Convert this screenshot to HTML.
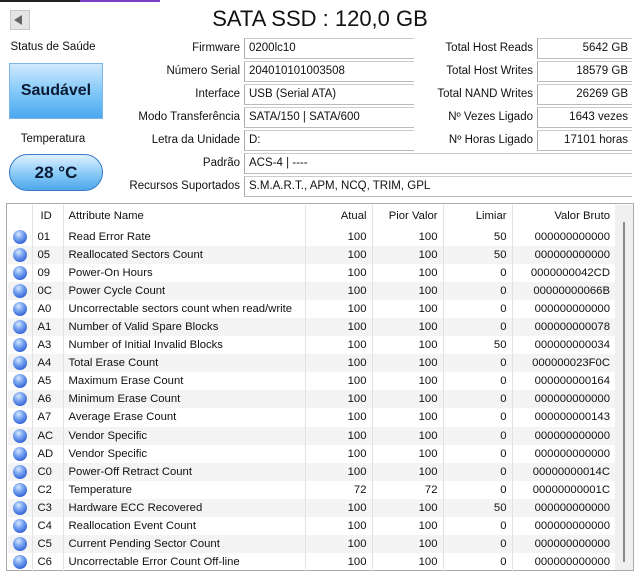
<!DOCTYPE html>
<html><head><meta charset="utf-8"><style>
*{margin:0;padding:0;box-sizing:border-box}
body{width:640px;height:576px;background:#fff;font-family:"Liberation Sans",sans-serif;font-size:11.5px;color:#111;position:relative;overflow:hidden}
.a{position:absolute;white-space:nowrap}
.lbl{position:absolute;text-align:right;white-space:nowrap}
.box{position:absolute;height:21px;border-left:1px solid #aaa;border-top:1px solid #ccc;border-bottom:1px solid #bbb;padding:3px 4px;white-space:nowrap}
.r{text-align:right}
table{border-collapse:collapse;position:absolute;left:8px;top:205px;width:607px;table-layout:fixed}
td,th{height:18.05px;line-height:18px;padding:0 5px;font-weight:normal;white-space:nowrap;overflow:hidden;font-size:11.3px}
th{height:23px;line-height:20px;vertical-align:top;padding-top:1px}
tr:nth-child(odd) td{background:#f4f4f4}
td.c,th.c{border-left:1px solid #e2e2e2}
td.d{padding:0 0 0 5px;line-height:0}
.dot{display:inline-block;margin-top:0;width:14px;height:14px;border-radius:50%;background:radial-gradient(circle at 40% 30%,#d8e8ff 0,#7aa6f0 35%,#2f5fd6 80%,#1c3fa8 100%)}
</style></head><body>
<div class="a" style="left:0;top:0;width:80px;height:2px;background:#222"></div>
<div class="a" style="left:80px;top:0;width:80px;height:2px;background:#7b3fc7"></div>
<div class="a" style="left:10px;top:10px;width:20px;height:20px;background:#e4e4e4;border:1px solid #c8c8c8"></div>
<div class="a" style="left:14px;top:15px;width:0;height:0;border-top:5px solid transparent;border-bottom:5px solid transparent;border-right:8px solid #666"></div>
<div class="a" style="left:0;width:640px;top:6px;text-align:center;font-size:22px;color:#111">SATA SSD : 120,0 GB</div>
<div class="a" style="left:0;width:106px;top:41px;text-align:center;font-size:11.5px">Status de Saúde</div>
<div class="a" style="left:9px;top:63px;width:94px;height:56px;border:1px solid #7bb7e8;background:linear-gradient(#cfeaff,#7ec6f7 55%,#4aa8ee);font-weight:bold;font-size:16px;text-align:center;line-height:54px;color:#0a1a33">Saudável</div>
<div class="a" style="left:0;width:106px;top:133px;text-align:center">Temperatura</div>
<div class="a" style="left:9px;top:154px;width:94px;height:37px;border-radius:19px;border:1px solid #3a7cc8;background:linear-gradient(#dff1ff,#86c9f6 55%,#4da6ea);font-weight:bold;font-size:17px;text-align:center;line-height:35px;color:#0a1a33">28 °C</div>

<div class="lbl" style="right:400px;top:42px">Firmware</div>
<div class="lbl" style="right:400px;top:65px">Número Serial</div>
<div class="lbl" style="right:400px;top:88px">Interface</div>
<div class="lbl" style="right:400px;top:111px">Modo Transferência</div>
<div class="lbl" style="right:400px;top:134px">Letra da Unidade</div>
<div class="lbl" style="right:400px;top:157px">Padrão</div>
<div class="lbl" style="right:400px;top:180px">Recursos Suportados</div>
<div class="box" style="left:244px;top:38px;width:170px">0200lc10</div>
<div class="box" style="left:244px;top:61px;width:170px">204010101003508</div>
<div class="box" style="left:244px;top:84px;width:170px">USB (Serial ATA)</div>
<div class="box" style="left:244px;top:107px;width:170px">SATA/150 | SATA/600</div>
<div class="box" style="left:244px;top:130px;width:170px">D:</div>
<div class="box" style="left:244px;top:153px;width:388px">ACS-4 | ----</div>
<div class="box" style="left:244px;top:176px;width:388px">S.M.A.R.T., APM, NCQ, TRIM, GPL</div>

<div class="lbl" style="right:107px;top:42px">Total Host Reads</div>
<div class="lbl" style="right:107px;top:65px">Total Host Writes</div>
<div class="lbl" style="right:107px;top:88px">Total NAND Writes</div>
<div class="lbl" style="right:107px;top:111px">Nº Vezes Ligado</div>
<div class="lbl" style="right:107px;top:134px">Nº Horas Ligado</div>
<div class="box r" style="left:537px;top:38px;width:95px">5642 GB</div>
<div class="box r" style="left:537px;top:61px;width:95px">18579 GB</div>
<div class="box r" style="left:537px;top:84px;width:95px">26269 GB</div>
<div class="box r" style="left:537px;top:107px;width:95px">1643 vezes</div>
<div class="box r" style="left:537px;top:130px;width:95px">17101 horas</div>

<div class="a" style="left:6px;top:203px;width:628px;height:368px;border:1px solid #aaa"></div>
<div class="a" style="left:615px;top:205px;width:18px;height:365px;background:#f0f0f0"></div>
<div class="a" style="left:623px;top:222px;width:2px;height:340px;background:#888"></div>
<table>
<colgroup><col style="width:24px"><col style="width:31px"><col style="width:242px"><col style="width:67px"><col style="width:71px"><col style="width:69px"><col style="width:103px"></colgroup>
<tr><th></th><th class="c" style="text-align:left;padding-left:8px">ID</th><th class="c" style="text-align:left">Attribute Name</th><th class="c r">Atual</th><th class="c r">Pior Valor</th><th class="c r">Limiar</th><th class="c r">Valor Bruto</th></tr>
<tr><td class="d"><span class="dot"></span></td><td class="c">01</td><td class="c">Read Error Rate</td><td class="c r">100</td><td class="c r">100</td><td class="c r">50</td><td class="c r">000000000000</td></tr>
<tr><td class="d"><span class="dot"></span></td><td class="c">05</td><td class="c">Reallocated Sectors Count</td><td class="c r">100</td><td class="c r">100</td><td class="c r">50</td><td class="c r">000000000000</td></tr>
<tr><td class="d"><span class="dot"></span></td><td class="c">09</td><td class="c">Power-On Hours</td><td class="c r">100</td><td class="c r">100</td><td class="c r">0</td><td class="c r">0000000042CD</td></tr>
<tr><td class="d"><span class="dot"></span></td><td class="c">0C</td><td class="c">Power Cycle Count</td><td class="c r">100</td><td class="c r">100</td><td class="c r">0</td><td class="c r">00000000066B</td></tr>
<tr><td class="d"><span class="dot"></span></td><td class="c">A0</td><td class="c">Uncorrectable sectors count when read/write</td><td class="c r">100</td><td class="c r">100</td><td class="c r">0</td><td class="c r">000000000000</td></tr>
<tr><td class="d"><span class="dot"></span></td><td class="c">A1</td><td class="c">Number of Valid Spare Blocks</td><td class="c r">100</td><td class="c r">100</td><td class="c r">0</td><td class="c r">000000000078</td></tr>
<tr><td class="d"><span class="dot"></span></td><td class="c">A3</td><td class="c">Number of Initial Invalid Blocks</td><td class="c r">100</td><td class="c r">100</td><td class="c r">50</td><td class="c r">000000000034</td></tr>
<tr><td class="d"><span class="dot"></span></td><td class="c">A4</td><td class="c">Total Erase Count</td><td class="c r">100</td><td class="c r">100</td><td class="c r">0</td><td class="c r">000000023F0C</td></tr>
<tr><td class="d"><span class="dot"></span></td><td class="c">A5</td><td class="c">Maximum Erase Count</td><td class="c r">100</td><td class="c r">100</td><td class="c r">0</td><td class="c r">000000000164</td></tr>
<tr><td class="d"><span class="dot"></span></td><td class="c">A6</td><td class="c">Minimum Erase Count</td><td class="c r">100</td><td class="c r">100</td><td class="c r">0</td><td class="c r">000000000000</td></tr>
<tr><td class="d"><span class="dot"></span></td><td class="c">A7</td><td class="c">Average Erase Count</td><td class="c r">100</td><td class="c r">100</td><td class="c r">0</td><td class="c r">000000000143</td></tr>
<tr><td class="d"><span class="dot"></span></td><td class="c">AC</td><td class="c">Vendor Specific</td><td class="c r">100</td><td class="c r">100</td><td class="c r">0</td><td class="c r">000000000000</td></tr>
<tr><td class="d"><span class="dot"></span></td><td class="c">AD</td><td class="c">Vendor Specific</td><td class="c r">100</td><td class="c r">100</td><td class="c r">0</td><td class="c r">000000000000</td></tr>
<tr><td class="d"><span class="dot"></span></td><td class="c">C0</td><td class="c">Power-Off Retract Count</td><td class="c r">100</td><td class="c r">100</td><td class="c r">0</td><td class="c r">00000000014C</td></tr>
<tr><td class="d"><span class="dot"></span></td><td class="c">C2</td><td class="c">Temperature</td><td class="c r">72</td><td class="c r">72</td><td class="c r">0</td><td class="c r">00000000001C</td></tr>
<tr><td class="d"><span class="dot"></span></td><td class="c">C3</td><td class="c">Hardware ECC Recovered</td><td class="c r">100</td><td class="c r">100</td><td class="c r">50</td><td class="c r">000000000000</td></tr>
<tr><td class="d"><span class="dot"></span></td><td class="c">C4</td><td class="c">Reallocation Event Count</td><td class="c r">100</td><td class="c r">100</td><td class="c r">0</td><td class="c r">000000000000</td></tr>
<tr><td class="d"><span class="dot"></span></td><td class="c">C5</td><td class="c">Current Pending Sector Count</td><td class="c r">100</td><td class="c r">100</td><td class="c r">0</td><td class="c r">000000000000</td></tr>
<tr><td class="d"><span class="dot"></span></td><td class="c">C6</td><td class="c">Uncorrectable Error Count Off-line</td><td class="c r">100</td><td class="c r">100</td><td class="c r">0</td><td class="c r">000000000000</td></tr>
</table>
</body></html>
